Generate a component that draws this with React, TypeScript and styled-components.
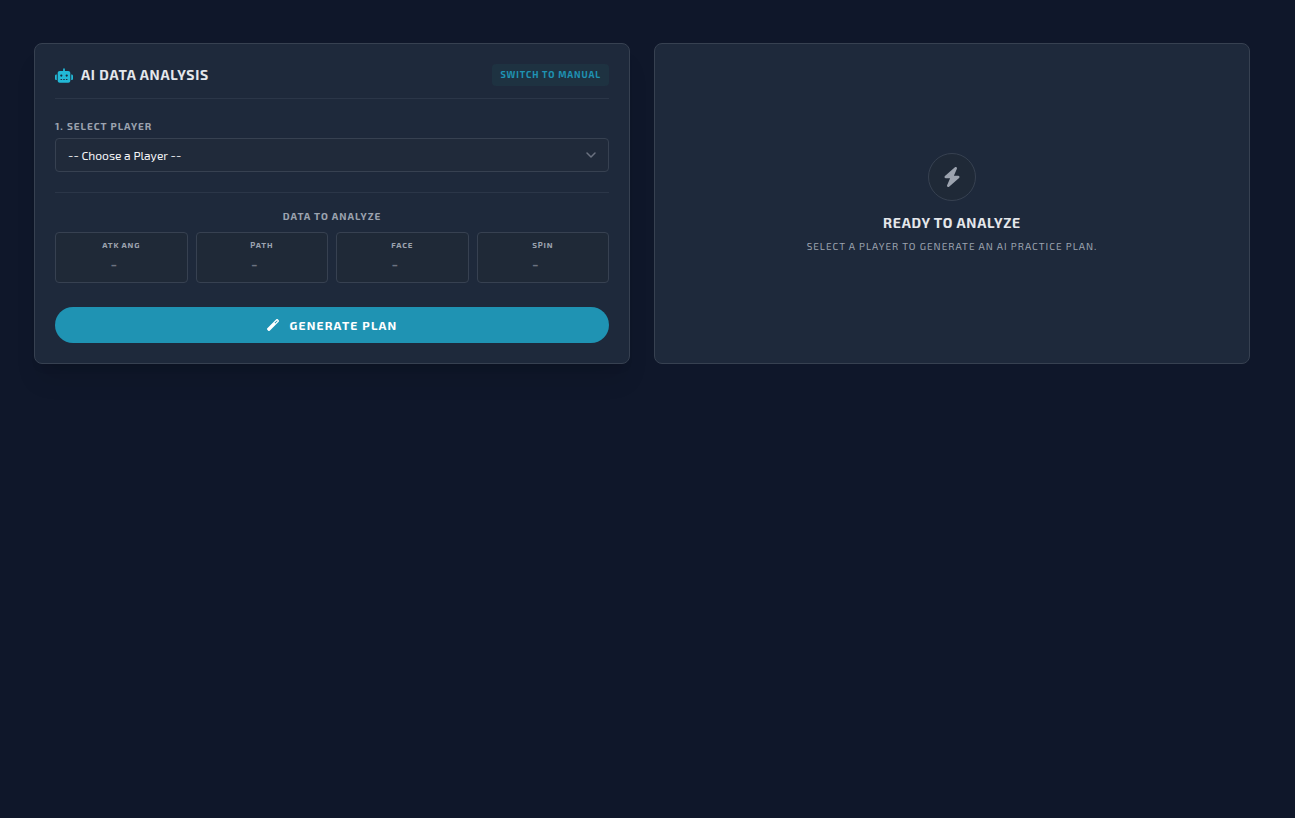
import React from "react";
import styled, { createGlobalStyle } from "styled-components";
import { FaBolt, FaRobot, FaWandMagic } from "react-icons/fa6";

const GlobalStyle = createGlobalStyle`
  *, *::before, *::after { box-sizing: border-box; }
  body {
    margin: 0;
    background: #0f172a;
    color: #e5e7eb;
    font-family: "Exo 2", "Noto Sans", "Open Sans", sans-serif;
  }
  h2, h3, p, dl, dt, dd { margin: 0; }
  button, select { font-family: inherit; }
`;

const Page = styled.main`
  min-height: 100vh;
  padding: 43px 11px 32px 0;
`;

const Columns = styled.div`
  display: grid;
  grid-template-columns: repeat(2, minmax(0, 1fr));
  gap: 24px;
  max-width: 1280px;
  margin: 0 auto;
  padding: 0 32px;

  @media (max-width: 800px) {
    grid-template-columns: minmax(0, 1fr);
  }
`;

const Card = styled.section<{ $raised?: boolean }>`
  padding: 20px;
  background: #1e293b;
  border: 1px solid #374151;
  border-radius: 8px;
  box-shadow: ${(p) => (p.$raised ? "0 20px 25px -5px rgba(0, 0, 0, 0.1), 0 8px 10px -6px rgba(0, 0, 0, 0.1)" : "none")};
`;

const CardHeader = styled.header`
  display: flex;
  align-items: center;
  justify-content: space-between;
  padding-bottom: 12px;
  border-bottom: 1px solid #2b3648;
`;

const Title = styled.h2`
  display: flex;
  align-items: center;
  gap: 8px;
  font-size: 14px;
  line-height: 20px;
  font-weight: 700;
  letter-spacing: 0.05em;
  text-transform: uppercase;

  svg { width: 18px; height: 15px; color: #22b8d6; }
`;

const ModeButton = styled.button`
  padding: 0 8px;
  border: 0;
  border-radius: 4px;
  background: #1e3241;
  color: #1f93b3;
  font-size: 9px;
  line-height: 22px;
  font-weight: 700;
  letter-spacing: 0.1em;
  text-transform: uppercase;
  cursor: pointer;
`;

const Field = styled.div`
  padding: 20px 0;
  border-bottom: 1px solid #2b3648;
`;

const FieldLabel = styled.label`
  display: block;
  margin-bottom: 4px;
  color: #9ca3af;
  font-size: 10px;
  line-height: 15px;
  font-weight: 700;
  letter-spacing: 0.1em;
  text-transform: uppercase;
`;

const SelectBox = styled.div`
  position: relative;

  svg {
    position: absolute;
    top: 7px;
    right: 8px;
    width: 20px;
    height: 20px;
    pointer-events: none;
  }
`;

const PlayerSelect = styled.select`
  display: block;
  width: 100%;
  height: 34px;
  padding: 0 40px 0 12px;
  appearance: none;
  border: 1px solid #374151;
  border-radius: 4px;
  background: #202a3a;
  color: #f3f4f6;
  font-size: 12px;
`;

const DataHeading = styled.h3`
  margin: 16px 0 8px;
  color: #9ca3af;
  font-size: 10px;
  line-height: 15px;
  font-weight: 700;
  letter-spacing: 0.1em;
  text-align: center;
  text-transform: uppercase;
`;

const Metrics = styled.dl`
  display: grid;
  grid-template-columns: repeat(4, minmax(0, 1fr));
  gap: 8px;
`;

const Metric = styled.div`
  height: 51px;
  padding: 5px 4px;
  border: 1px solid #374151;
  border-radius: 4px;
  background: #1f2937;
  text-align: center;
`;

const MetricName = styled.dt`
  color: #9ca3af;
  font-size: 8px;
  line-height: 14px;
  font-weight: 700;
  letter-spacing: 0.1em;
  text-transform: uppercase;
`;

const MetricValue = styled.dd`
  padding: 2px 15px 0 0;
  color: #6b7280;
  font-size: 16px;
  line-height: 20px;
  font-weight: 700;
`;

const GenerateButton = styled.button`
  display: flex;
  align-items: center;
  justify-content: center;
  gap: 11px;
  width: 100%;
  height: 36px;
  margin-top: 24px;
  border: 0;
  border-radius: 18px;
  background: #1f93b3;
  color: #ffffff;
  font-size: 12px;
  line-height: 16px;
  font-weight: 700;
  letter-spacing: 0.1em;
  text-transform: uppercase;
  cursor: pointer;

  svg { width: 12px; height: 12px; }
`;

const EmptyState = styled(Card)`
  display: flex;
  flex-direction: column;
  align-items: center;
  justify-content: center;
  text-align: center;
`;

const BoltBadge = styled.div`
  display: grid;
  place-items: center;
  width: 48px;
  height: 48px;
  margin-bottom: 12px;
  border: 1px solid #374151;
  border-radius: 50%;
  background: #1f2937;
  color: #9ca3af;

  svg { width: 18px; height: 20px; }
`;

const EmptyTitle = styled.h2`
  font-size: 14px;
  line-height: 20px;
  font-weight: 700;
  letter-spacing: 0.05em;
  text-transform: uppercase;
`;

const EmptyText = styled.p`
  margin-top: 6px;
  color: #9ca3af;
  font-size: 10px;
  line-height: 15px;
  letter-spacing: 0.1em;
  text-transform: uppercase;
`;

const metrics = ["Atk Ang", "Path", "Face", "Spin"];

export default function App() {
  return (
    <>
      <GlobalStyle />
      <Page>
        <Columns>
          <Card $raised>
            <CardHeader>
              <Title>
                <FaRobot aria-hidden />
                AI Data Analysis
              </Title>
              <ModeButton type="button">Switch to Manual</ModeButton>
            </CardHeader>
            <Field>
              <FieldLabel htmlFor="player">1. Select Player</FieldLabel>
              <SelectBox>
                <PlayerSelect id="player" defaultValue="">
                  <option value="">-- Choose a Player --</option>
                </PlayerSelect>
                <svg viewBox="0 0 20 20" fill="none" aria-hidden="true">
                  <path d="M6 8l4 4 4-4" stroke="#6b7280" strokeWidth="1.5" strokeLinecap="round" strokeLinejoin="round" />
                </svg>
              </SelectBox>
            </Field>
            <DataHeading>Data to Analyze</DataHeading>
            <Metrics>
              {metrics.map((name) => (
                <Metric key={name}>
                  <MetricName>{name}</MetricName>
                  <MetricValue>-</MetricValue>
                </Metric>
              ))}
            </Metrics>
            <GenerateButton type="button">
              <FaWandMagic aria-hidden />
              Generate Plan
            </GenerateButton>
          </Card>
          <EmptyState>
            <BoltBadge>
              <FaBolt aria-hidden />
            </BoltBadge>
            <EmptyTitle>Ready to Analyze</EmptyTitle>
            <EmptyText>Select a player to generate an AI practice plan.</EmptyText>
          </EmptyState>
        </Columns>
      </Page>
    </>
  );
}
